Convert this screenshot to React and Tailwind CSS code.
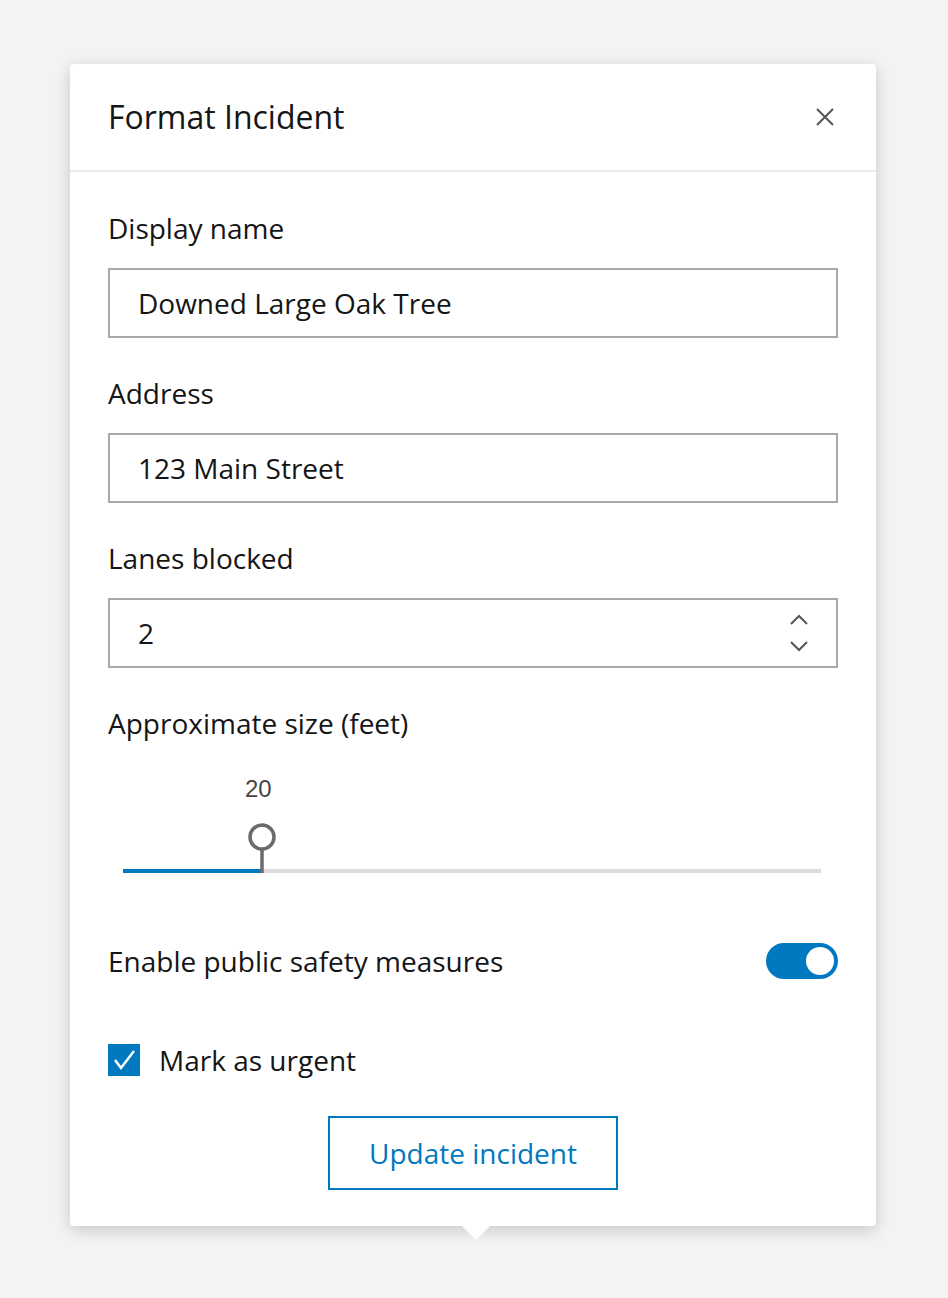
export default function App() {
  const font = { fontFamily: "'Open Sans', Lato, sans-serif" };
  return (
    <div className="min-h-[1298px] w-[948px] bg-[#f3f3f3] pt-[64px]" style={font}>
      <div className="relative ml-[70px] w-[806px] rounded-[4px] bg-white shadow-[0_4px_16px_rgba(0,0,0,0.18)]">
        <div className="flex h-[108px] items-center justify-between border-b-2 border-[#eaeaea] pl-[38px] pr-[40px]">
          <span className="text-[32px] text-[#151515]">Format Incident</span>
          <svg width="22" height="22" viewBox="0 0 22 22" stroke="#555" strokeWidth="2">
            <path d="M3 3 L19 19 M19 3 L3 19" />
          </svg>
        </div>
        <div className="flex flex-col px-[38px] pb-[36px] text-[#151515]">
          <label className="mt-[38px] h-[36px] text-[28px] leading-[36px]">Display name</label>
          <div className="mt-[22px] flex h-[70px] items-center border-2 border-[#a8a8a8] px-[28px] text-[28px]">Downed Large Oak Tree</div>
          <label className="mt-[37px] h-[36px] text-[28px] leading-[36px]">Address</label>
          <div className="mt-[22px] flex h-[70px] items-center border-2 border-[#a8a8a8] px-[28px] text-[28px]">123 Main Street</div>
          <label className="mt-[37px] h-[36px] text-[28px] leading-[36px]">Lanes blocked</label>
          <div className="mt-[22px] flex h-[70px] items-center justify-between border-2 border-[#a8a8a8] pl-[28px] pr-[26px] text-[28px]">
            <span>2</span>
            <svg width="22" height="44" viewBox="0 0 22 44" fill="none" stroke="#555" strokeWidth="2">
              <path d="M3 13 L11 5 L19 13" />
              <path d="M3 31 L11 39 L19 31" />
            </svg>
          </div>
          <label className="mt-[37px] h-[36px] text-[28px] leading-[36px]">Approximate size (feet)</label>
          <div className="relative mt-[28px] h-[108px]">
            <span className="absolute left-[137px] top-[2px] text-[24px] text-[#444]" style={{ fontFamily: "'Liberation Sans', Arial, sans-serif" }}>20</span>
            <div className="absolute left-[15px] right-[17px] top-[100px] h-[4px] bg-[#dcdcdc]" />
            <div className="absolute left-[15px] top-[100px] h-[4px] w-[140px] bg-[#0079c1]" />
            <svg className="absolute left-[138px] top-[52px]" width="32" height="52" viewBox="0 0 32 52" fill="none" stroke="#6a6a6a" strokeWidth="3.5">
              <circle cx="16" cy="16" r="12" fill="white" />
              <path d="M16 28 V52" />
            </svg>
          </div>
          <div className="mt-[63px] flex items-center justify-between">
            <span className="text-[28px]">Enable public safety measures</span>
            <div className="flex h-[36px] w-[72px] items-center justify-end rounded-full bg-[#0079c1] pr-[4px]">
              <div className="h-[28px] w-[28px] rounded-full bg-white" />
            </div>
          </div>
          <div className="mt-[57px] flex items-center">
            <div className="flex h-[32px] w-[32px] items-center justify-center bg-[#0079c1]">
              <svg width="26" height="26" viewBox="0 0 26 26" fill="none" stroke="white" strokeWidth="2.5">
                <path d="M4 13 L10 21 L23 4" />
              </svg>
            </div>
            <span className="ml-[19px] text-[28px]">Mark as urgent</span>
          </div>
          <div className="mt-[35px] flex justify-center">
            <div className="flex h-[74px] w-[290px] items-center justify-center border-2 border-[#0079c1] text-[28px] text-[#0079c1]">Update incident</div>
          </div>
        </div>
        <div className="absolute bottom-[-14px] left-[392px] h-0 w-0 border-x-[14px] border-t-[14px] border-x-transparent border-t-white" />
      </div>
    </div>
  );
}
